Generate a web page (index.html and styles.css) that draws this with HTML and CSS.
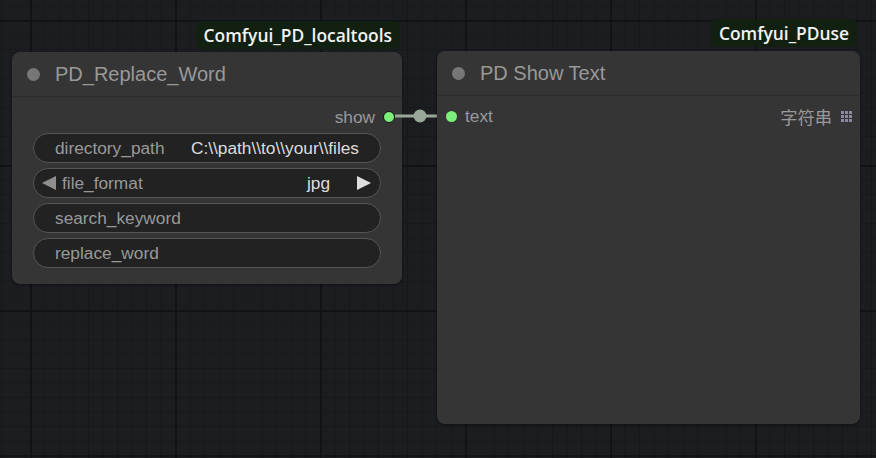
FILE: index.html
```html
<!DOCTYPE html>
<html>
<head>
<meta charset="utf-8">
<link rel="stylesheet" href="styles.css">
</head>
<body>
<div class="canvas">
  <div class="node-wrap left-wrap">
    <div class="badge">Comfyui_PD_localtools</div>
    <div class="node left-node">
      <div class="title"><span class="dot"></span><span class="title-text">PD_Replace_Word</span></div>
      <div class="body">
        <div class="slot-row out-row"><span class="slot-label">show</span><span class="slot out"></span></div>
        <div class="widget"><span class="w-label">directory_path</span><span class="w-value">C:\\path\\to\\your\\files</span></div>
        <div class="widget combo">
          <svg class="arrow" width="14" height="14" viewBox="0 0 14 14"><polygon points="0,7 14,0 14,14" fill="#8e8e8e"/></svg>
          <span class="w-label">file_format</span><span class="w-value">jpg</span>
          <svg class="arrow right" width="14" height="14" viewBox="0 0 14 14"><polygon points="0,0 14,7 0,14" fill="#dddddd"/></svg>
        </div>
        <div class="widget"><span class="w-label">search_keyword</span></div>
        <div class="widget"><span class="w-label">replace_word</span></div>
      </div>
    </div>
  </div>

  <svg class="link" width="44" height="16" viewBox="0 0 44 16">
    <line x1="0" y1="8" x2="44" y2="8" stroke="#9aa89a" stroke-width="3"/>
    <circle cx="25" cy="8" r="6.5" fill="#9aa89a"/>
  </svg>

  <div class="node-wrap right-wrap">
    <div class="badge">Comfyui_PDuse</div>
    <div class="node right-node">
      <div class="title"><span class="dot"></span><span class="title-text">PD Show Text</span></div>
      <div class="body">
        <div class="slot-row in-row">
          <span class="slot in"></span><span class="slot-label">text</span>
          <span class="type">字符串</span>
          <svg class="grid-icon" width="11" height="11" viewBox="0 0 11 11">
            <g fill="#8b88a0">
              <rect x="0" y="0" width="3" height="3"/><rect x="4" y="0" width="3" height="3"/><rect x="8" y="0" width="3" height="3"/>
              <rect x="0" y="4" width="3" height="3"/><rect x="4" y="4" width="3" height="3"/><rect x="8" y="4" width="3" height="3"/>
              <rect x="0" y="8" width="3" height="3"/><rect x="4" y="8" width="3" height="3"/><rect x="8" y="8" width="3" height="3"/>
            </g>
          </svg>
        </div>
      </div>
    </div>
  </div>
</div>
</body>
</html>
```

FILE: styles.css
```css
html, body {
  margin: 0;
  padding: 0;
}
body {
  width: 876px;
  height: 458px;
  overflow: hidden;
  background: #1c1d21;
  font-family: "Liberation Sans", Arial, sans-serif;
}
.canvas {
  position: relative;
  width: 876px;
  height: 458px;
  background-color: #1c1d21;
  background-image:
    linear-gradient(to right, #121316 0, #121316 2px, transparent 2px),
    linear-gradient(to bottom, #121316 0, #121316 2px, transparent 2px),
    linear-gradient(to right, #17181b 0, #17181b 1px, transparent 1px),
    linear-gradient(to bottom, #17181b 0, #17181b 1px, transparent 1px);
  background-size: 145px 145px, 145px 145px, 14.5px 14.5px, 14.5px 14.5px;
  background-position: 30px 20px, 30px 20px, 30px 20px, 30px 20px;
}
.node-wrap {
  position: absolute;
  display: flex;
  flex-direction: column;
  align-items: flex-end;
}
.left-wrap {
  left: 12px;
  top: 21px;
  width: 390px;
}
.right-wrap {
  left: 437px;
  top: 19px;
  width: 423px;
}
.badge {
  background: #112011;
  color: #f2f2f2;
  font-family: "Open Sans", "Noto Sans", sans-serif;
  font-weight: 600;
  font-size: 17.4px;
  line-height: 28px;
  height: 28px;
  padding: 0 8px;
  border-radius: 6px;
  margin-right: 2px;
  margin-bottom: 3px;
}
.right-wrap .badge {
  margin-bottom: 4px;
  margin-right: 3px;
}
.node {
  width: 100%;
  background: #353535;
  border-radius: 8px;
  box-shadow: 0 1px 3px rgba(0,0,0,0.45);
  box-sizing: border-box;
}
.left-node { height: 232px; }
.right-node { height: 373px; }
.title {
  height: 44px;
  display: flex;
  align-items: center;
  border-bottom: 1px solid #2d2d2d;
  padding-left: 15px;
}
.dot {
  width: 13px;
  height: 13px;
  border-radius: 50%;
  background: #777;
  margin-right: 15px;
}
.title-text {
  color: #999;
  font-size: 20px;
}
.body {
  padding: 10px 21px 0 21px;
}
.slot-row {
  height: 20px;
  display: flex;
  align-items: center;
  color: #999;
  font-size: 17.3px;
}
.out-row {
  justify-content: flex-end;
  margin-right: -14px;
  margin-bottom: 6px;
}
.out-row .slot-label { margin-right: 8px; }
.slot {
  width: 11px;
  height: 11px;
  border-radius: 50%;
  background: #7af07a;
}
.slot.out {
  border: 1.5px solid #111;
  width: 10px;
  height: 10px;
}
.in-row {
  margin-left: -12.5px;
  margin-right: -13px;
}
.in-row .slot { margin-right: 8.5px; }
.in-row .type {
  margin-left: auto;
  margin-right: 9px;
  font-family: "Noto Sans CJK SC", sans-serif;
  font-size: 17.3px;
  color: #999;
}
.widget {
  height: 30px;
  box-sizing: border-box;
  border: 1.5px solid #555;
  border-radius: 15px;
  background: #222;
  margin-bottom: 5px;
  display: flex;
  align-items: center;
  padding: 0 21px;
  font-size: 17.3px;
  width: 348px;
}
.w-label { color: #999; }
.w-value { color: #ddd; margin-left: auto; }
.combo { padding: 0 9px 0 8px; }
.arrow { margin-right: 6px; flex: none; }
.arrow.right { margin-left: 27px; margin-right: 0; }
.link {
  position: absolute;
  left: 395px;
  top: 108px;
}
```
